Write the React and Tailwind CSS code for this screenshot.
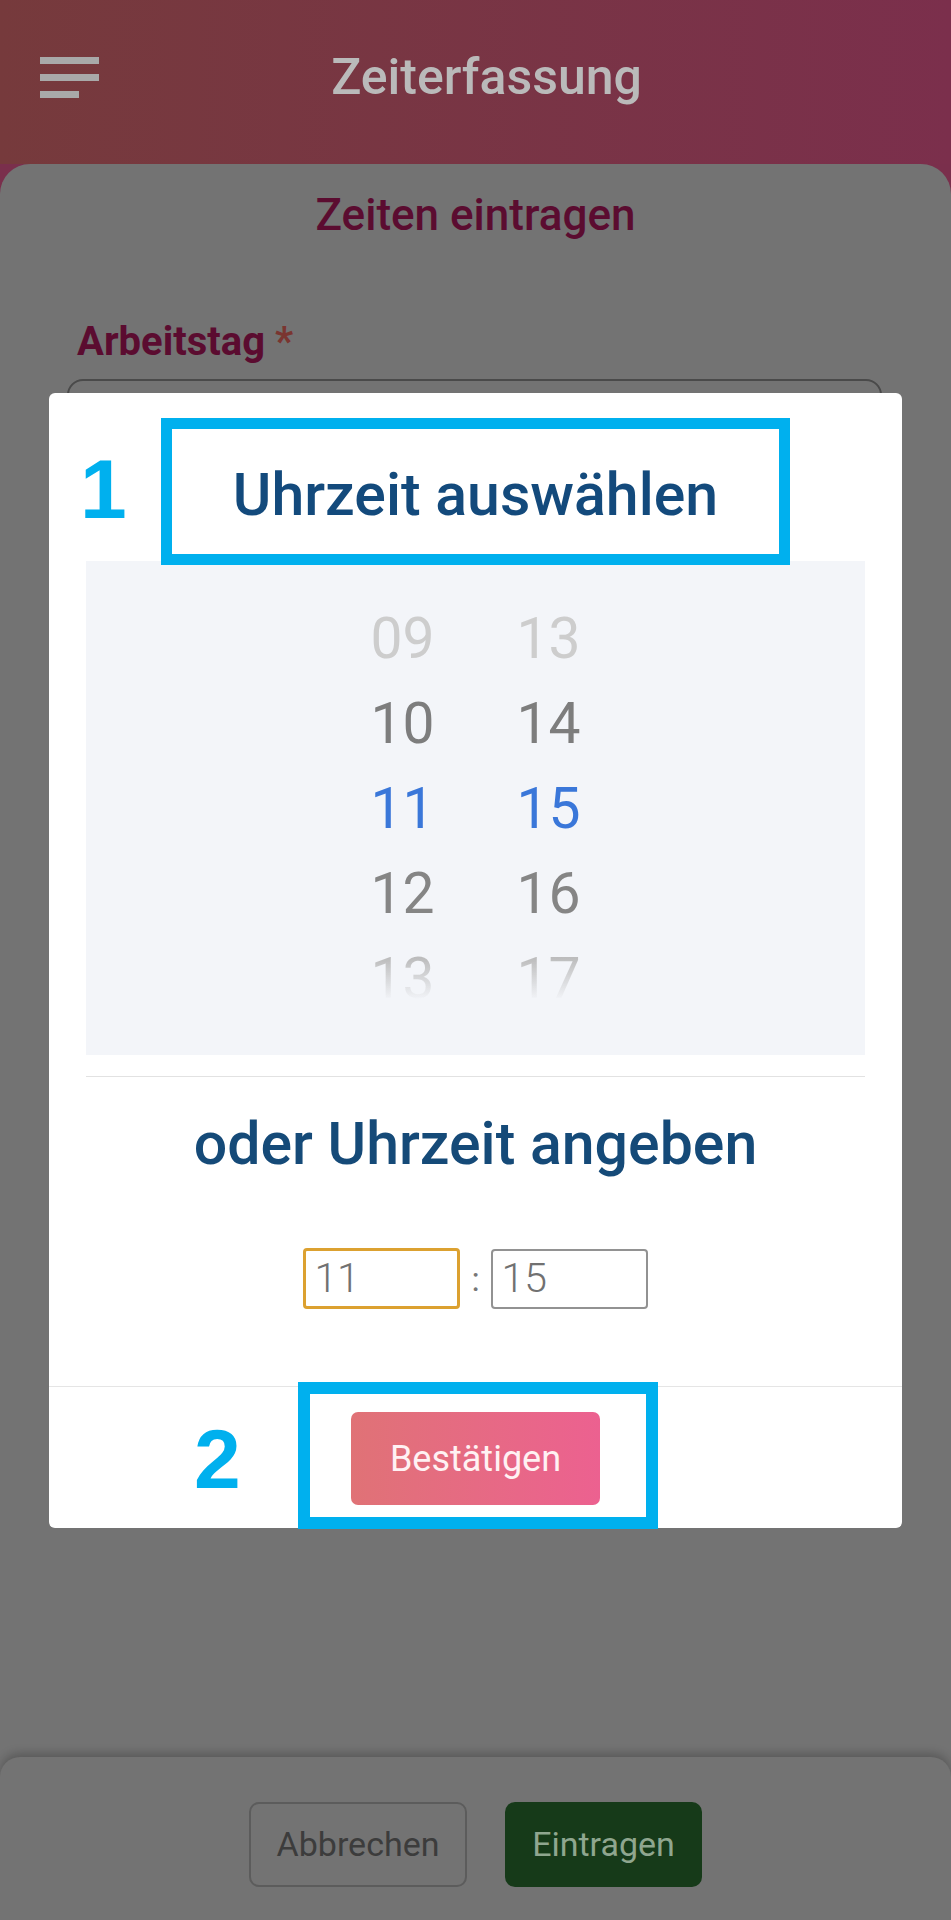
import React from "react";

const hours = ["09", "10", "11", "12", "13"];
const mins = ["13", "14", "15", "16", "17"];
const rowCls = [
  "text-[#cdcdcd]",
  "text-[#7d7d7d]",
  "text-[#3a77d9]",
  "text-[#858585]",
  "bg-linear-to-b from-[#b5b5b5] from-20% to-transparent to-75% bg-clip-text text-transparent",
];

function Column({ items }) {
  return (
    <div className="flex w-[146px] flex-col">
      {items.map((v, i) => (
        <div key={i} className={`h-[85px] text-center text-[57px] leading-[85px] ${rowCls[i]}`}>
          {v}
        </div>
      ))}
    </div>
  );
}

export default function App() {
  return (
    <div
      className="relative flex h-[1920px] w-[951px] flex-col overflow-hidden bg-[#7a2f4c]"
      style={{ fontFamily: "Roboto, 'Noto Sans', sans-serif" }}
    >
      {/* Header */}
      <header className="h-[164px] shrink-0 bg-linear-to-r from-[#763a3c] to-[#7b2f4c] pt-[47px]">
        <div className="flex h-[60px] items-center px-[40px]">
          <div className="flex w-[59px] flex-col gap-[10px]">
            <span className="h-[7px] w-[59px] bg-[#a9a9a9]" />
            <span className="h-[7px] w-[59px] bg-[#a9a9a9]" />
            <span className="h-[7px] w-[39px] bg-[#a9a9a9]" />
          </div>
          <h1 className="flex-1 pr-[37px] text-center text-[50px] font-medium leading-[60px] text-[#bababa]">
            Zeiterfassung
          </h1>
        </div>
      </header>

      {/* Card */}
      <main className="flex flex-1 flex-col rounded-t-[30px] bg-[#737373]">
        <h2 className="pt-[29px] text-center text-[44px] font-medium leading-[44px] text-[#5b0c30]">
          Zeiten eintragen
        </h2>
        <label className="mt-[85px] pl-[77px] text-[40px] font-bold leading-[40px] text-[#5b0c30]">
          Arbeitstag <span className="text-[#7a3530]">*</span>
        </label>
        <div className="ml-[67px] mr-[69px] mt-[17px] h-[70px] rounded-[16px] border-2 border-[#4a4a4a]" />

        <footer className="mt-auto flex h-[163px] justify-center gap-[38px] rounded-t-[20px] bg-[#737373] pt-[45px] shadow-[0_-4px_10px_rgba(0,0,0,0.22)]">
          <button className="h-[85px] w-[218px] rounded-[10px] border-2 border-[#5c5c5c] text-[34px] text-[#3c3c3c]">
            Abbrechen
          </button>
          <button className="h-[85px] w-[197px] rounded-[10px] bg-[#163a19] text-[34px] text-[#8fa68f]">
            Eintragen
          </button>
        </footer>
      </main>

      {/* Modal */}
      <div className="absolute left-[49px] top-[393px] flex w-[853px] flex-col rounded-[6px] bg-white">
        <div className="h-[168px] pt-[72px] text-center text-[59px] font-medium leading-[59px] text-[#134a7c]">
          Uhrzeit auswählen
        </div>

        <div className="relative mx-[37px] flex h-[494px] items-center justify-center bg-[#f3f5f9]">
          <Column items={hours} />
          <Column items={mins} />
        </div>

        <div className="mx-[37px] mt-[21px] h-px bg-[#e2e2e2]" />

        <div className="mt-[37px] text-center text-[59px] font-medium leading-[59px] text-[#154a78]">
          oder Uhrzeit angeben
        </div>

        <div className="mt-[75px] flex h-[61px] items-center justify-center gap-[11px]">
          <input
            readOnly
            value="11"
            className="h-[61px] w-[157px] rounded-[4px] border-[3px] border-[#dca130] pl-[8px] text-[41px] font-light text-[#717171] outline-none"
          />
          <span className="text-[34px] leading-none text-[#777]">:</span>
          <input
            readOnly
            value="15"
            className="h-[60px] w-[157px] rounded-[4px] border-2 border-[#929292] pl-[9px] text-[41px] font-light text-[#717171] outline-none"
          />
        </div>

        <div className="mt-[77px] h-px bg-[#e5e5e5]" />

        <div className="flex h-[141px] justify-center pt-[25px]">
          <button className="h-[93px] w-[249px] rounded-[7px] bg-linear-to-r from-[#e07276] to-[#ec6190] text-[36px] text-[#fff1f3]">
            Bestätigen
          </button>
        </div>

        {/* Annotations */}
        <div className="absolute left-[112px] top-[25px] h-[147px] w-[629px] border-[11px] border-[#00b0ee]" />
        <div className="absolute left-[249px] top-[989px] h-[147px] w-[360px] border-[12px] border-[#00b0ee]" />
        <span
          className="absolute left-[31px] top-[54px] text-[84px] font-bold leading-[84px] text-[#00b0ee]"
          style={{ fontFamily: "'Liberation Sans', Arial, sans-serif" }}
        >
          1
        </span>
        <span
          className="absolute left-[145px] top-[1024px] text-[84px] font-bold leading-[84px] text-[#00b0ee]"
          style={{ fontFamily: "'Liberation Sans', Arial, sans-serif" }}
        >
          2
        </span>
      </div>
    </div>
  );
}
